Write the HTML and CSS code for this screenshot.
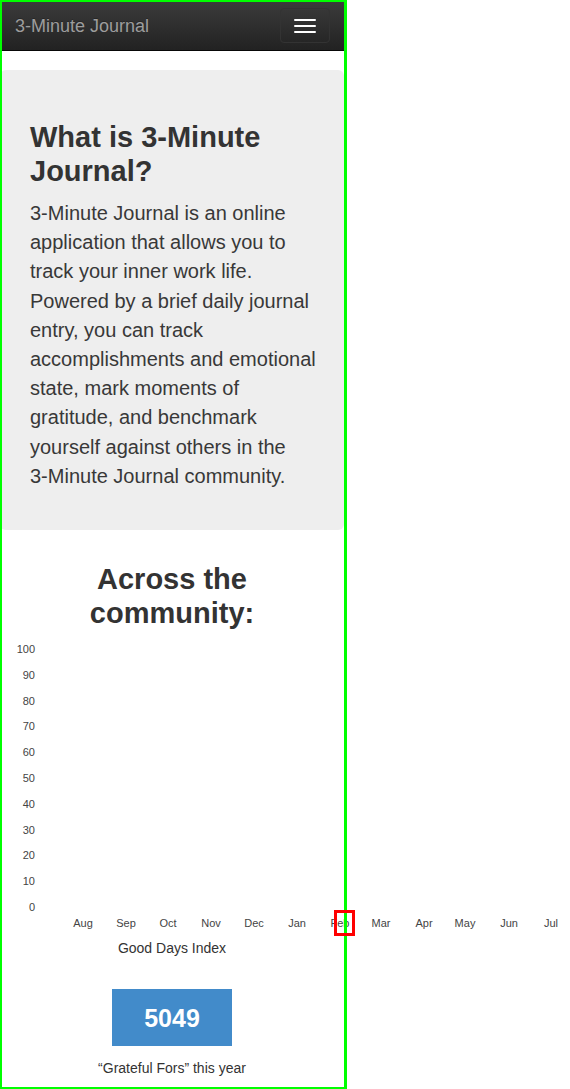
FILE: index.html
```html
<!DOCTYPE html>
<html lang="en">
<head>
<meta charset="utf-8">
<title>3-Minute Journal</title>
<link rel="stylesheet" href="styles.css">
</head>
<body>
<div class="page">
  <nav class="navbar">
    <span class="brand">3-Minute Journal</span>
    <button class="toggle" type="button" aria-label="Toggle navigation">
      <span class="bar"></span><span class="bar"></span><span class="bar"></span>
    </button>
  </nav>

  <section class="jumbotron">
    <h1 class="title">What is 3-Minute Journal?</h1>
    <p class="lead">3-Minute Journal is an online application that allows you to track your inner work life. Powered by a brief daily journal entry, you can track accomplishments and emotional state, mark moments of gratitude, and benchmark yourself against others in the <span class="nowrap">3-Minute</span> Journal community.</p>
  </section>

  <section class="community">
    <h2 class="title center narrow">Across the community:</h2>
    <svg class="chart" width="570" height="308" viewBox="0 0 570 308">
      <g class="ylabels" text-anchor="end">
        <text x="35" y="23">100</text>
        <text x="35" y="48.8">90</text>
        <text x="35" y="74.6">80</text>
        <text x="35" y="100.4">70</text>
        <text x="35" y="126.2">60</text>
        <text x="35" y="152">50</text>
        <text x="35" y="177.8">40</text>
        <text x="35" y="203.6">30</text>
        <text x="35" y="229.4">20</text>
        <text x="35" y="255.2">10</text>
        <text x="35" y="281">0</text>
      </g>
      <g class="xlabels" text-anchor="middle">
        <text x="83" y="297">Aug</text>
        <text x="126" y="297">Sep</text>
        <text x="168" y="297">Oct</text>
        <text x="211" y="297">Nov</text>
        <text x="254" y="297">Dec</text>
        <text x="297" y="297">Jan</text>
        <text x="340" y="297">Feb</text>
        <text x="381" y="297">Mar</text>
        <text x="424" y="297">Apr</text>
        <text x="465" y="297">May</text>
        <text x="509" y="297">Jun</text>
        <text x="551" y="297">Jul</text>
      </g>
    </svg>
    <div class="caption">Good Days Index</div>
    <div class="stat">5049</div>
    <div class="caption stat-caption">“Grateful Fors” this year</div>
  </section>
</div>
<div class="viewport-outline"></div>
<div class="overflow-mark"></div>
</body>
</html>
```

FILE: styles.css
```css
html, body {
  margin: 0;
  padding: 0;
  background: #fff;
}
body {
  font-family: "Liberation Sans", Helvetica, Arial, sans-serif;
  color: #333;
  font-size: 14px;
  line-height: 20px;
}
.page {
  width: 344px;
  position: relative;
}
.navbar {
  height: 51px;
  box-sizing: border-box;
  border-bottom: 1px solid #080808;
  background: linear-gradient(to bottom, #3c3c3c 0%, #222 100%);
  display: flex;
  align-items: flex-start;
  justify-content: space-between;
}
.brand {
  color: #9d9d9d;
  font-size: 18px;
  line-height: 20px;
  padding: 16px 15px 14px;
  text-shadow: 0 -1px 0 rgba(0,0,0,.25);
}
.toggle {
  margin: 8px 14px 0 0;
  width: 50px;
  height: 35px;
  box-sizing: border-box;
  border: 1px solid #333;
  border-radius: 4px;
  background: transparent;
  padding: 0;
  display: flex;
  flex-direction: column;
  align-items: center;
  justify-content: center;
  gap: 4px;
}
.bar {
  display: block;
  width: 22px;
  height: 2px;
  background: #fff;
  border-radius: 1px;
}
.jumbotron {
  margin-top: 19px;
  background: #eee;
  border-radius: 6px;
  padding: 50px 28px 39px 30px;
}
.title {
  margin: 0;
  font-size: 29px;
  line-height: 34px;
  font-weight: bold;
  color: #333;
}
.lead {
  margin: 11px 0 0;
  font-size: 20px;
  line-height: 29.2px;
  font-weight: 300;
  color: #383838;
  width: 290px;
}
.nowrap {
  white-space: nowrap;
}
.community {
  padding-top: 32px;
}
.center {
  text-align: center;
}
.narrow {
  padding: 0 30px;
}
.chart {
  display: block;
  overflow: visible;
}
.chart text {
  font-family: "Liberation Sans", Helvetica, Arial, sans-serif;
  font-size: 11px;
  fill: #444;
}
.caption {
  text-align: center;
  font-size: 14px;
  line-height: 20px;
  color: #333;
}
.stat {
  margin: 31px auto 0;
  width: 120px;
  height: 57px;
  background: #428bca;
  color: #fff;
  font-size: 25px;
  font-weight: bold;
  display: flex;
  align-items: center;
  justify-content: center;
}
.stat-caption {
  margin-top: 12px;
}
.viewport-outline {
  position: absolute;
  left: 0;
  top: 0;
  width: 347px;
  height: 1089px;
  box-sizing: border-box;
  border-style: solid;
  border-color: #00ff00;
  border-width: 2px 3px 2px 2px;
  pointer-events: none;
}
.overflow-mark {
  position: absolute;
  left: 334px;
  top: 910px;
  width: 21px;
  height: 26px;
  box-sizing: border-box;
  border: 3px solid #ff0000;
  pointer-events: none;
}
```
